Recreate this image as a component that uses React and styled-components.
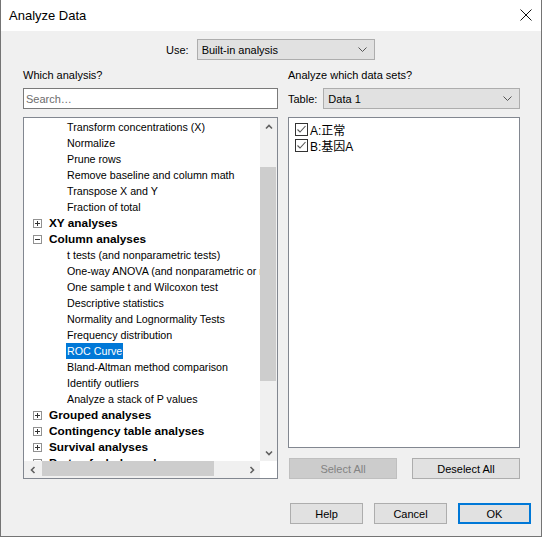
import React from "react";
import styled, { createGlobalStyle } from "styled-components";

const Global = createGlobalStyle`
  html, body { margin: 0; padding: 0; background: #ffffff; }
  body { font-family: "Liberation Sans", Arial, sans-serif; font-size: 11px; color: #000; }
  * { box-sizing: border-box; }
`;

const Window = styled.div`
  width: 542px;
  height: 537px;
  display: flex;
  flex-direction: column;
  border: 1px solid #747474;
  border-top: none;
  background: #f0f0f0;
`;

const TitleBar = styled.div`
  height: 31px;
  background: #ffffff;
  display: flex;
  align-items: center;
  justify-content: space-between;
  padding: 0 8px 1px 8px;
  font-size: 13px;
`;

const CloseBtn = styled.div`
  width: 12px;
  height: 12px;
  margin-right: 1px;
  display: flex;
`;

const Body = styled.div`
  flex: 1;
  display: flex;
  flex-direction: column;
  padding: 8px 10px 0 22px;
`;

const UseRow = styled.div`
  display: flex;
  align-items: center;
  gap: 8px;
  padding-left: 143px;
  height: 21px;
`;

const SelectBox = styled.div`
  width: ${(p) => p.$w}px;
  height: 21px;
  background: #e1e1e1;
  border: 1px solid #adadad;
  display: flex;
  align-items: center;
  justify-content: space-between;
  padding: 0 7px 0 4px;
`;

const Columns = styled.div`
  margin-top: 8px;
  display: grid;
  grid-template-columns: 255px 232px;
  column-gap: 10px;
`;

const Col = styled.div`
  display: flex;
  flex-direction: column;
`;

const Label = styled.div`
  height: 14px;
  line-height: 14px;
  margin-bottom: 6px;
`;

const SearchInput = styled.div`
  height: 21px;
  background: #fff;
  border: 1px solid #7a7a7a;
  display: flex;
  align-items: center;
  padding-left: 2px;
  color: #6d6d6d;
`;

const TableRow = styled.div`
  display: flex;
  align-items: center;
  gap: 6px;
  height: 21px;
`;

const TreeBox = styled.div`
  margin-top: 8px;
  height: 362px;
  background: #fff;
  border: 1px solid #828790;
  display: grid;
  grid-template-columns: 236px 17px;
  grid-template-rows: 343px 17px;
`;

const Viewport = styled.div`
  overflow: hidden;
  padding-top: 1px;
`;

const Row = styled.div`
  height: 16px;
  display: flex;
  align-items: center;
  white-space: nowrap;
  padding-left: ${(p) => (p.$group ? 9 : 43)}px;
  font-weight: ${(p) => (p.$group ? 700 : 400)};
  font-size: ${(p) => (p.$group ? 11.8 : 10.7)}px;
  gap: 7px;
`;

const ItemText = styled.span`
  height: 16px;
  line-height: 16px;
  padding: 0 1px;
  margin-left: -1px;
  background: ${(p) => (p.$sel ? "#0078d7" : "transparent")};
  color: ${(p) => (p.$sel ? "#fff" : "#000")};
`;

const Expander = styled.span`
  width: 9px;
  height: 9px;
  border: 1px solid #919191;
  background: #fff;
  display: flex;
  flex: none;
`;

const VScroll = styled.div`
  background: #f0f0f0;
  display: flex;
  flex-direction: column;
`;

const HScroll = styled.div`
  background: #f0f0f0;
  display: flex;
`;

const Arrow = styled.div`
  width: 17px;
  height: 17px;
  flex: none;
  display: flex;
  align-items: center;
  justify-content: center;
`;

const VTrack = styled.div`
  flex: 1;
  display: flex;
  flex-direction: column;
`;

const VThumb = styled.div`
  margin-top: ${(p) => p.$offset}px;
  height: ${(p) => p.$size}px;
  background: #cdcdcd;
  margin-right: 1px;
`;

const HTrack = styled.div`
  flex: 1;
  display: flex;
`;

const HThumb = styled.div`
  margin-left: ${(p) => p.$offset}px;
  width: ${(p) => p.$size}px;
  height: 15px;
  background: #cdcdcd;
`;

const Corner = styled.div`
  background: #fff;
`;

const DataBox = styled.div`
  margin-top: 8px;
  height: 331px;
  background: #fff;
  border: 1px solid #828790;
  padding: 3px 0 0 6px;
  display: flex;
  flex-direction: column;
`;

const CheckRow = styled.div`
  height: 16px;
  display: flex;
  align-items: center;
  gap: 2px;
  font-size: 12px;
  font-family: "Liberation Sans", "Noto Sans CJK SC", sans-serif;
`;

const Box = styled.span`
  width: 13px;
  height: 13px;
  border: 1px solid #333;
  background: #fff;
  display: flex;
  flex: none;
`;

const ButtonRow = styled.div`
  margin-top: 10px;
  display: flex;
  justify-content: space-between;
  padding-left: 1px;
`;

const Button = styled.div`
  width: ${(p) => p.$w}px;
  height: 21px;
  background: ${(p) => (p.$disabled ? "#cccccc" : "#e1e1e1")};
  border: ${(p) => (p.$default ? "2px solid #0078d7" : p.$disabled ? "1px solid #bfbfbf" : "1px solid #adadad")};
  color: ${(p) => (p.$disabled ? "#838383" : "#000")};
  display: flex;
  align-items: center;
  justify-content: center;
  font-size: 11px;
`;

const BottomRow = styled.div`
  margin-top: 24px;
  display: flex;
  justify-content: flex-end;
  gap: 11px;
`;

const Chevron = ({ dir = "down", color = "#606060" }) => {
  if (dir === "left" || dir === "right") {
    const p = dir === "left" ? "4.5,1 1.5,4 4.5,7" : "1.5,1 4.5,4 1.5,7";
    return (
      <svg width="6" height="8" viewBox="0 0 6 8">
        <polyline points={p} fill="none" stroke={color} strokeWidth="1.6" />
      </svg>
    );
  }
  const pts = dir === "up" ? "1,4.5 4,1.5 7,4.5" : "1,1.5 4,4.5 7,1.5";
  return (
    <svg width="8" height="6" viewBox="0 0 8 6">
      <polyline points={pts} fill="none" stroke={color} strokeWidth="1.6" />
    </svg>
  );
};

const ThinChevron = () => (
  <svg width="9" height="5" viewBox="0 0 9 5">
    <polyline points="0.5,0.5 4.5,4.5 8.5,0.5" fill="none" stroke="#555" strokeWidth="1" />
  </svg>
);

const Plus = ({ open }) => (
  <svg width="7" height="7" viewBox="0 0 7 7">
    <line x1="1" y1="3.5" x2="6" y2="3.5" stroke="#333" strokeWidth="1" />
    {!open && <line x1="3.5" y1="1" x2="3.5" y2="6" stroke="#333" strokeWidth="1" />}
  </svg>
);

const Check = () => (
  <svg width="11" height="11" viewBox="0 0 11 11">
    <polyline points="1.5,5.5 4,8 9.5,2" fill="none" stroke="#555" strokeWidth="1.1" />
  </svg>
);

const tree = [
  { t: "Transform concentrations (X)" },
  { t: "Normalize" },
  { t: "Prune rows" },
  { t: "Remove baseline and column math" },
  { t: "Transpose X and Y" },
  { t: "Fraction of total" },
  { t: "XY analyses", g: true },
  { t: "Column analyses", g: true, open: true },
  { t: "t tests (and nonparametric tests)" },
  { t: "One-way ANOVA (and nonparametric or mixed)" },
  { t: "One sample t and Wilcoxon test" },
  { t: "Descriptive statistics" },
  { t: "Normality and Lognormality Tests" },
  { t: "Frequency distribution" },
  { t: "ROC Curve", sel: true },
  { t: "Bland-Altman method comparison" },
  { t: "Identify outliers" },
  { t: "Analyze a stack of P values" },
  { t: "Grouped analyses", g: true },
  { t: "Contingency table analyses", g: true },
  { t: "Survival analyses", g: true },
  { t: "Parts of whole analyses", g: true },
];

export default function App() {
  return (
    <>
      <Global />
      <Window>
        <TitleBar>
          <span>Analyze Data</span>
          <CloseBtn>
            <svg width="12" height="12" viewBox="0 0 12 12">
              <line x1="0.5" y1="0.5" x2="11.5" y2="11.5" stroke="#111" strokeWidth="1" />
              <line x1="11.5" y1="0.5" x2="0.5" y2="11.5" stroke="#111" strokeWidth="1" />
            </svg>
          </CloseBtn>
        </TitleBar>
        <Body>
          <UseRow>
            <span>Use:</span>
            <SelectBox $w={178}>
              <span>Built-in analysis</span>
              <ThinChevron />
            </SelectBox>
          </UseRow>
          <Columns>
            <Col>
              <Label>Which analysis?</Label>
              <SearchInput>Search…</SearchInput>
              <TreeBox>
                <Viewport>
                  {tree.map((it) => (
                    <Row key={it.t} $group={it.g}>
                      {it.g && (
                        <Expander>
                          <Plus open={it.open} />
                        </Expander>
                      )}
                      <ItemText $sel={it.sel}>{it.t}</ItemText>
                    </Row>
                  ))}
                </Viewport>
                <VScroll>
                  <Arrow>
                    <Chevron dir="up" />
                  </Arrow>
                  <VTrack>
                    <VThumb $offset={32} $size={214} />
                  </VTrack>
                  <Arrow>
                    <Chevron dir="down" />
                  </Arrow>
                </VScroll>
                <HScroll>
                  <Arrow>
                    <Chevron dir="left" />
                  </Arrow>
                  <HTrack>
                    <HThumb $offset={1} $size={172} />
                  </HTrack>
                  <Arrow>
                    <Chevron dir="right" />
                  </Arrow>
                </HScroll>
                <Corner />
              </TreeBox>
            </Col>
            <Col>
              <Label>Analyze which data sets?</Label>
              <TableRow>
                <span>Table:</span>
                <SelectBox $w={197}>
                  <span>Data 1</span>
                  <ThinChevron />
                </SelectBox>
              </TableRow>
              <DataBox>
                <CheckRow>
                  <Box>
                    <Check />
                  </Box>
                  <span>A:正常</span>
                </CheckRow>
                <CheckRow>
                  <Box>
                    <Check />
                  </Box>
                  <span>B:基因A</span>
                </CheckRow>
              </DataBox>
              <ButtonRow>
                <Button $w={108} $disabled>Select All</Button>
                <Button $w={108}>Deselect All</Button>
              </ButtonRow>
            </Col>
          </Columns>
          <BottomRow>
            <Button $w={73}>Help</Button>
            <Button $w={73}>Cancel</Button>
            <Button $w={73} $default>OK</Button>
          </BottomRow>
        </Body>
      </Window>
    </>
  );
}
